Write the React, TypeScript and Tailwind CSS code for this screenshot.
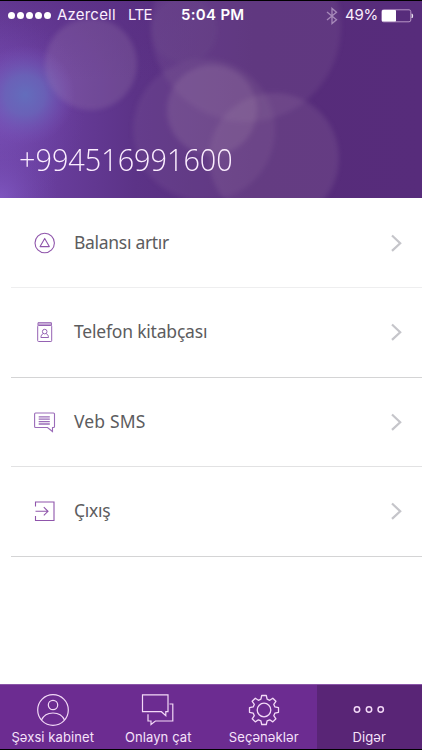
import type { ReactNode } from "react";

function TopUpIcon() {
  return (
    <svg width="22" height="22" viewBox="0 0 22 22" fill="none" stroke="#8f55ab" strokeWidth="1.1">
      <circle cx="10.7" cy="11" r="9.7" />
      <path d="M10.7 6.4 15.3 14.6H6.1Z" strokeLinejoin="round" />
    </svg>
  );
}

function PhonebookIcon() {
  return (
    <svg width="22" height="22" viewBox="0 0 22 22" fill="none" stroke="#9562b3" strokeWidth="1">
      <rect x="3.700" y="4.500" width="14" height="16" rx="0.800" />
      <path d="M4 4.500V1.700H17.400V4.500M4.200 3.100H17.200" />
      <circle cx="10.700" cy="10.600" r="2.300" />
      <path d="M9.200 12.600C7.700 13.300 7 14.600 6.900 16.500H14.500C14.400 14.600 13.700 13.300 12.200 12.600" />
    </svg>
  );
}

function SmsIcon() {
  return (
    <svg width="22" height="22" viewBox="0 0 22 22" fill="none" stroke="#9b6cb9" strokeWidth="1.1">
      <path d="M1.500 2H19.500Q20.500 2 20.500 3V15.500Q20.500 16.500 19.500 16.500H18.500V20.500L13.500 16.500H1.500Q0.600 16.500 0.600 15.500V3Q0.600 2 1.500 2Z" />
      <path d="M4.700 5.800H15.800M4.700 8.200H15.800M4.700 10.600H15.800M4.700 13H15.800" strokeWidth="1.300" />
    </svg>
  );
}

function ExitIcon() {
  return (
    <svg width="22" height="22" viewBox="0 0 22 22" fill="none" stroke="#8f55ab" strokeWidth="1.1">
      <path d="M1.500 6.500V2H20V20.500H1.500V16M1.500 11.300H14M9.800 7.200 14 11.300 9.800 15.400" />
    </svg>
  );
}

function ProfileIcon() {
  return (
    <svg width="34" height="34" viewBox="0 0 34 34" fill="none" stroke="#f3d9f7" strokeWidth="1.2">
      <circle cx="17" cy="17" r="15.3" />
      <circle cx="17" cy="12" r="4.7" />
      <path d="M5.500 27C7.500 22.500 11.500 20 17 20S26.500 22.500 28.500 27" />
    </svg>
  );
}

function ChatIcon() {
  return (
    <svg width="34" height="34" viewBox="0 0 34 34" fill="none" stroke="#f3d9f7" strokeWidth="1.2">
      <path d="M1.500 1.800H27V18.700H24.800V22.600L20.400 18.700H1.500Z" />
      <path d="M28.500 11H31.800V28H14.400L10 31.500V28H7V21.200" />
    </svg>
  );
}

function GearIcon() {
  return (
    <svg width="34" height="34" viewBox="0 0 34 34" fill="none" stroke="#f3d9f7" strokeWidth="1.3" strokeLinejoin="round">
      <circle cx="17" cy="17" r="6.800" />
      <path d="M14.700 2.500H19.300L20.100 6.200 22.700 7.300 25.800 5.200 28.900 8.300 26.800 11.400 27.900 13.900 31.500 14.700V19.300L27.900 20.100 26.800 22.700 28.900 25.800 25.800 28.900 22.700 26.800 20.100 27.900 19.300 31.500H14.700L13.900 27.900 11.400 26.800 8.300 28.900 5.200 25.800 7.300 22.700 6.200 20.100 2.500 19.300V14.700L6.200 13.900 7.300 11.400 5.200 8.300 8.300 5.200 11.400 7.300 13.900 6.200Z" />
    </svg>
  );
}

function MoreIcon() {
  return (
    <svg width="34" height="34" viewBox="0 0 34 34" fill="none" stroke="#f3d9f7" strokeWidth="1.500">
      <circle cx="5" cy="16.500" r="2.700" />
      <circle cx="17" cy="16.500" r="2.700" />
      <circle cx="28.700" cy="16.500" r="2.700" />
    </svg>
  );
}

// Soft light circles behind the status bar and the phone number
function Bokeh() {
  return (
    <svg className="absolute inset-0" width="422" height="198" viewBox="0 0 422 198">
      <defs>
        <linearGradient id="base" x1="0" x2="1">
          <stop offset="0" stopColor="#6f45a8" />
          <stop offset="0.14" stopColor="#673c9a" />
          <stop offset="0.32" stopColor="#5c3387" />
          <stop offset="0.6" stopColor="#562c7a" />
          <stop offset="1" stopColor="#572c7b" />
        </linearGradient>
        <linearGradient id="top" x1="0" x2="0" y1="0" y2="1">
          <stop offset="0" stopColor="#582d80" stopOpacity="0.6" />
          <stop offset="0.4" stopColor="#582d80" stopOpacity="0" />
        </linearGradient>
        <radialGradient id="blue">
          <stop offset="0" stopColor="#636dbc" />
          <stop offset="0.4" stopColor="#6867ba" stopOpacity="0.8" />
          <stop offset="1" stopColor="#7950b8" stopOpacity="0" />
        </radialGradient>
        <radialGradient id="violet">
          <stop offset="0" stopColor="#8058c2" stopOpacity="0.9" />
          <stop offset="1" stopColor="#7046ab" stopOpacity="0" />
        </radialGradient>
        <filter id="soft" x="-20%" y="-20%" width="140%" height="140%" colorInterpolationFilters="sRGB">
          <feGaussianBlur stdDeviation="2.500" />
        </filter>
      </defs>
      <rect width="422" height="198" fill="url(#base)" />
      <rect width="200" height="198" fill="url(#top)" />
      <ellipse cx="5" cy="110" rx="80" ry="95" fill="url(#violet)" opacity="0.6" />
      <circle cx="25" cy="94" r="50" fill="url(#blue)" />
      <circle cx="0" cy="198" r="58" fill="url(#violet)" />
      <g fill="#b69ab8" filter="url(#soft)">
        <circle cx="91" cy="63" r="46" fillOpacity="0.190" />
        <circle cx="246" cy="26" r="95" fillOpacity="0.110" />
        <circle cx="184" cy="29" r="33" fillOpacity="0.050" />
        <circle cx="204" cy="129" r="71" fillOpacity="0.100" />
        <circle cx="212" cy="109" r="45" fillOpacity="0.180" />
        <circle cx="274" cy="157" r="65" fillOpacity="0.150" />
      </g>
    </svg>
  );
}

function StatusBar() {
  return (
    <div className="relative flex h-[29px] items-center px-2 font-['Inter',sans-serif] text-[15px] text-[#fbeefd]">
      <div className="flex w-[49px] gap-[2px]">
        {[0, 1, 2, 3, 4].map((dot) => (
          <span key={dot} className="size-[7px] rounded-full bg-white" />
        ))}
      </div>
      <span className="w-[71px] tracking-[0.2px]">Azercell</span>
      <span className="w-[53px] tracking-[-0.6px]">LTE</span>
      <span className="text-[15px] font-semibold tracking-[0.3px] text-white">5:04 PM</span>
      <div className="ml-auto flex items-center">
        <svg className="mr-[7px]" width="12" height="18" viewBox="0 0 12 18" fill="none" stroke="#a78ab9" strokeWidth="1.300">
          <path d="M1 5 10.500 12.800 6 16.500V1.500L10.500 5.200 1 13" />
        </svg>
        <span className="w-[36px] tracking-[-0.200px]">49%</span>
        <svg width="33" height="14" viewBox="0 0 33 14" fill="none">
          <rect x="0.800" y="0.800" width="29" height="12" rx="1.800" stroke="#b796c6" strokeWidth="1" />
          <rect x="1" y="1" width="14" height="11.600" rx="0.800" fill="white" />
          <path d="M31 4.800Q32.600 7 31 9Z" fill="white" stroke="white" strokeWidth="0.600" />
        </svg>
      </div>
    </div>
  );
}

const rows: { label: string; icon: ReactNode; tracking: string; line: string }[] = [
  { label: "Balansı artır", icon: <TopUpIcon />, tracking: "tracking-[-0.300px]", line: "border-[#eeeeef]" },
  { label: "Telefon kitabçası", icon: <PhonebookIcon />, tracking: "tracking-[-0.200px]", line: "border-[#d4d4d5]" },
  { label: "Veb SMS", icon: <SmsIcon />, tracking: "tracking-[0.150px]", line: "border-[#e2e2e3]" },
  { label: "Çıxış", icon: <ExitIcon />, tracking: "tracking-[-0.300px]", line: "border-[#d4d4d5]" },
];

const tabs = [
  { label: "Şəxsi kabinet", icon: <ProfileIcon /> },
  { label: "Onlayn çat", icon: <ChatIcon /> },
  { label: "Seçənəklər", icon: <GearIcon /> },
  { label: "Digər", icon: <MoreIcon />, active: true },
];

export default function App() {
  return (
    <div className="flex h-[750px] w-[422px] flex-col overflow-hidden bg-white">
      <header className="relative h-[198px] shrink-0 overflow-hidden border-t border-black">
        <Bokeh />
        <StatusBar />
        <h1 className="relative mt-[106px] ml-[19px] origin-left scale-x-[0.9] font-['Open_Sans',sans-serif] text-[32px] leading-[46px] font-light whitespace-nowrap text-[#fceeff]">
          +994516991600
        </h1>
      </header>

      <main className="flex-1 pt-[0.600px] pl-[11px]">
        {rows.map((row) => (
          <button
            key={row.label}
            className={`flex h-[89.5px] w-full items-center border-b pr-[19px] pl-[23px] ${row.line}`}
          >
            {row.icon}
            <span
              className={`mb-[2px] ml-[18px] font-['Noto_Sans',sans-serif] text-[17.5px] leading-6 text-[#5c5c5e] ${row.tracking}`}
            >
              {row.label}
            </span>
            <svg className="ml-auto" width="13" height="20" viewBox="0 0 13 20" fill="none" stroke="#c5c5ca" strokeWidth="2.200">
              <path d="M2 2.500 10.200 10.200 2 17.900" />
            </svg>
          </button>
        ))}
      </main>

      <nav className="grid h-[66px] shrink-0 grid-cols-4 border-b border-black bg-[#6c2c91]">
        {tabs.map((tab) => (
          <button
            key={tab.label}
            className={`flex flex-col items-center border-t border-[#8a55a8] pt-[8px] ${tab.active ? "bg-[#592576]" : ""}`}
          >
            {tab.icon}
            <span className="mt-px font-['Inter',sans-serif] text-[13px] leading-[18px] tracking-[0.100px] whitespace-nowrap text-[#f6e2fa]">
              {tab.label}
            </span>
          </button>
        ))}
      </nav>
    </div>
  );
}
